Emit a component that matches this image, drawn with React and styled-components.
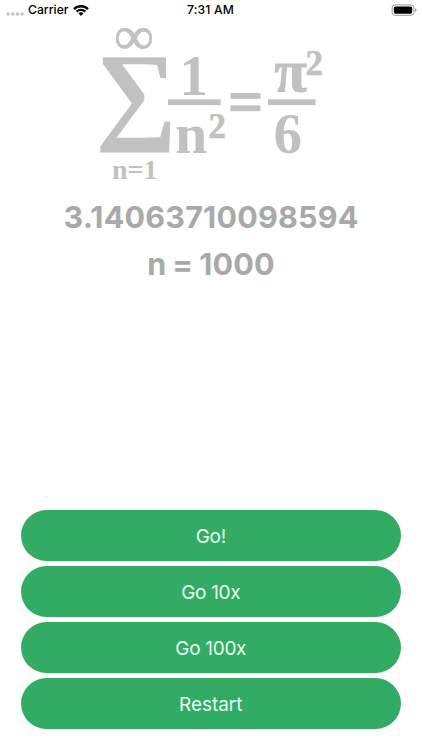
import React from "react";
import styled, { createGlobalStyle } from "styled-components";

const GlobalStyle = createGlobalStyle`
  * { box-sizing: border-box; }
  body { margin: 0; background: #fff; }
`;

const Screen = styled.main`
  width: 422px;
  height: 750px;
  display: flex;
  flex-direction: column;
  background: #fff;
  font-family: Inter, "Liberation Sans", sans-serif;
  overflow: hidden;
`;

const StatusBar = styled.header`
  display: grid;
  grid-template-columns: 1fr auto 1fr;
  align-items: center;
  height: 20px;
  padding: 0 5px 0 6px;
  color: #000;
  font-size: 12.2px;
  font-weight: 500;
  line-height: 20px;
`;

const Carrier = styled.div`
  display: flex;
  align-items: center;
`;

const CarrierName = styled.span`
  width: 41px;
  margin: 0 4px 0 4px;
`;

const Time = styled.time`
  margin-right: 2px;
  letter-spacing: 0.15px;
`;

const BatterySlot = styled.div`
  display: flex;
  justify-content: flex-end;
`;

const Formula = styled.svg`
  display: block;
  flex: none;
  width: 422px;
  height: 172px;
  overflow: visible;
  fill: #c1c1c1;
  font-family: "Liberation Serif", "Times New Roman", serif;
  font-weight: 700;
`;

const Results = styled.section`
  display: flex;
  flex-direction: column;
  align-items: center;
  padding-top: 1px;
`;

const Result = styled.div`
  height: 47px;
  line-height: 47px;
  color: #a9a9a9;
  font-size: 30.5px;
  font-weight: 700;
  letter-spacing: ${(p) => p.$tracking}px;
  word-spacing: ${(p) => p.$wordGap || 0}px;
  white-space: pre;
`;

const Actions = styled.nav`
  display: flex;
  flex-direction: column;
  gap: 5px;
  margin-top: auto;
  padding: 0 21px 21px 20.5px;
`;

const Action = styled.button`
  height: 51px;
  padding: 2px 0 0;
  border: 0;
  border-radius: 25.5px;
  background: #32ac64;
  color: #e9fbf0;
  font: 400 19px/49px Inter, "Liberation Sans", sans-serif;
  letter-spacing: ${(p) => p.$tracking}px;
`;

const Signal = () => (
  <svg width="18" height="20" fill="#c4c4c4">
    {[2, 6.8, 11.5, 16.2].map((x) => (
      <circle key={x} cx={x} cy="14" r="1.8" />
    ))}
  </svg>
);

const Wifi = () => (
  <svg width="16" height="20" viewBox="0 0 16 20" fill="#000">
    <path d="M0.2 8.2C4.5 3.8 11.5 3.8 15.8 8.2L14.2 9.9C10.8 6.6 5.2 6.6 1.8 9.9Z" />
    <path d="M2.8 10.8C5.8 7.9 10.2 7.9 13.2 10.8L11.6 12.4C9.5 10.5 6.5 10.5 4.4 12.4Z" />
    <path d="M5.4 13.3C7 12 9 12 10.6 13.3L8 16Z" />
  </svg>
);

const Battery = () => (
  <svg width="26" height="20" viewBox="0 0 26 20">
    <rect x="1.1" y="4.9" width="21.8" height="10.4" rx="3" fill="none" stroke="#999" />
    <rect x="2.8" y="6.5" width="18.4" height="7.2" rx="1.6" fill="#000" />
    <path d="M24 8.3Q25.6 8.8 25.6 10.1T24 11.9Z" fill="#999" />
  </svg>
);

const BaselSeries = () => (
  <Formula viewBox="0 20 422 172" role="img" aria-label="Basel series">
    <text x="115" y="53.5" fontSize="54" stroke="#c1c1c1" strokeWidth="0.9">∞</text>
    <text transform="translate(95.7 129.3) scale(0.96 0.922)" fontSize="118" stroke="#c1c1c1" strokeWidth="1">∑</text>
    <text x="112" y="178.5" fontSize="28">n=1</text>
    <text x="179.5" y="95" fontSize="57">1</text>
    <rect x="168" y="99.3" width="52.7" height="5.8" />
    <text x="175" y="153" fontSize="58">n</text>
    <text x="208.5" y="138" fontSize="35" stroke="#c1c1c1" strokeWidth="0.6">2</text>
    <rect x="230.5" y="93" width="30" height="5.8" />
    <rect x="230.5" y="105.4" width="30" height="5.8" />
    <text x="274.5" y="91" fontSize="59" stroke="#c1c1c1" strokeWidth="1">π</text>
    <text x="305.5" y="75.3" fontSize="35" stroke="#c1c1c1" strokeWidth="0.6">2</text>
    <rect x="268" y="99.3" width="47.6" height="5.8" />
    <text x="273.5" y="152.5" fontSize="57">6</text>
  </Formula>
);

const ACTIONS = [
  { label: "Go!", tracking: -0.3 },
  { label: "Go 10x", tracking: -0.3 },
  { label: "Go 100x", tracking: -0.3 },
  { label: "Restart", tracking: -0.05 },
];

export default function App() {
  return (
    <>
      <GlobalStyle />
      <Screen>
        <StatusBar>
          <Carrier>
            <Signal />
            <CarrierName>Carrier</CarrierName>
            <Wifi />
          </Carrier>
          <Time>7:31 AM</Time>
          <BatterySlot>
            <Battery />
          </BatterySlot>
        </StatusBar>
        <BaselSeries />
        <Results>
          <Result $tracking={0.2}>3.14063710098594</Result>
          <Result $tracking={0.2} $wordGap={-1.5}>n = 1000</Result>
        </Results>
        <Actions>
          {ACTIONS.map(({ label, tracking }) => (
            <Action key={label} $tracking={tracking}>
              {label}
            </Action>
          ))}
        </Actions>
      </Screen>
    </>
  );
}
